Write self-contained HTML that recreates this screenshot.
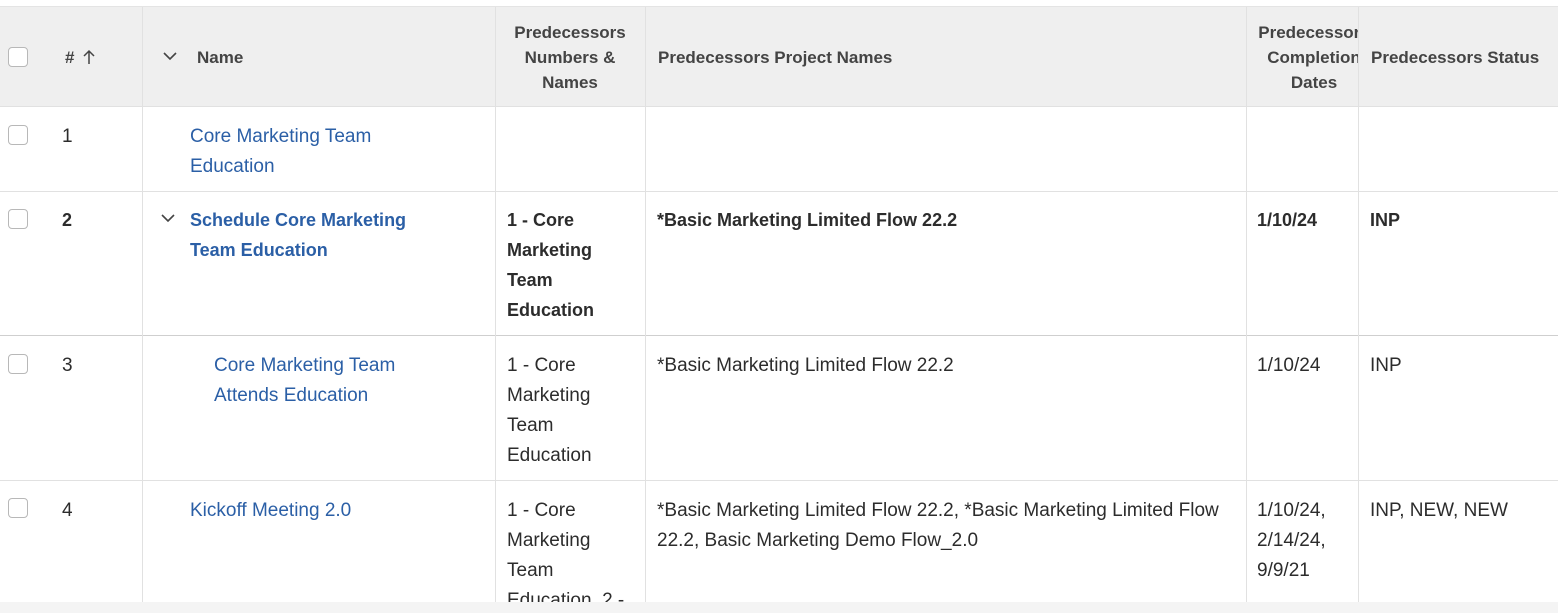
<!DOCTYPE html>
<html><head><meta charset="utf-8"><style>
body{margin:0;width:1558px;height:613px;overflow:hidden;background:#fff;font-family:"Liberation Sans",sans-serif;color:#2c2c2c;position:relative}
.a{position:absolute}
.t{position:absolute;font-size:19px;line-height:30px;white-space:nowrap;margin-top:2px}
.h{position:absolute;font-size:17px;line-height:25px;color:#444;font-weight:bold;white-space:nowrap}
.l{color:#2b5fa6}
.b{font-weight:bold;font-size:18px;margin-top:0}
.cb{position:absolute;left:8px;width:18px;height:18px;border:1px solid #b8b8b8;border-radius:4px;background:#fff}
.vl{position:absolute;width:1px;background:#e1e1e1}
.hl{position:absolute;left:0;width:1558px;height:1px;background:#e1e1e1}
</style></head><body>
<div class="a" style="left:0;top:6px;width:1558px;height:100px;background:#efefef;border-top:1px solid #e4e4e4"></div>
<div class="a" style="left:0;top:602px;width:1558px;height:11px;background:#f4f4f4"></div>
<div class="hl" style="top:106px"></div>
<div class="hl" style="top:191px"></div>
<div class="hl" style="top:335px;background:#cfcfcf"></div>
<div class="hl" style="top:480px"></div>
<div class="vl" style="left:142px;top:7px;height:595px"></div>
<div class="vl" style="left:495px;top:7px;height:595px"></div>
<div class="vl" style="left:645px;top:7px;height:595px"></div>
<div class="vl" style="left:1246px;top:7px;height:595px"></div>
<div class="vl" style="left:1358px;top:7px;height:595px"></div>
<div class="cb" style="top:47px"></div>
<div class="cb" style="top:125px"></div>
<div class="cb" style="top:209px"></div>
<div class="cb" style="top:354px"></div>
<div class="cb" style="top:498px"></div>
<div class="h" style="left:65px;top:45px">#</div>
<svg class="a" style="left:82px;top:49px" width="14" height="16"><path d="M7 15V2M2 7l5-5 5 5" stroke="#444" stroke-width="1.5" fill="none"/></svg>
<svg class="a" style="left:162px;top:51px" width="16" height="10"><path d="M2 2l6 6 6-6" stroke="#444" stroke-width="1.6" fill="none"/></svg>
<div class="h" style="left:197px;top:45px">Name</div>
<div class="h" style="left:495px;width:150px;top:20px;text-align:center">Predecessors<br>Numbers &amp;<br>Names</div>
<div class="h" style="left:658px;top:45px">Predecessors Project Names</div>
<div class="a" style="left:1247px;top:20px;width:111px;height:80px;overflow:hidden"><div class="h" style="left:11px;width:112px;top:0;text-align:center">Predecessors<br>Completion<br>Dates</div></div>
<div class="h" style="left:1371px;top:45px">Predecessors Status</div>

<div class="t" style="left:62px;top:120px">1</div>
<div class="t l" style="left:190px;top:120px">Core Marketing Team<br>Education</div>

<div class="t b" style="left:62px;top:205px">2</div>
<svg class="a" style="left:160px;top:213px" width="16" height="10"><path d="M2 2l6 6 6-6" stroke="#444" stroke-width="1.6" fill="none"/></svg>
<div class="t l b" style="left:190px;top:205px">Schedule Core Marketing<br>Team Education</div>
<div class="t b" style="left:507px;top:205px">1 - Core<br>Marketing<br>Team<br>Education</div>
<div class="t b" style="left:657px;top:205px">*Basic Marketing Limited Flow 22.2</div>
<div class="t b" style="left:1257px;top:205px">1/10/24</div>
<div class="t b" style="left:1370px;top:205px">INP</div>

<div class="t" style="left:62px;top:349px">3</div>
<div class="t l" style="left:214px;top:349px">Core Marketing Team<br>Attends Education</div>
<div class="t" style="left:507px;top:349px">1 - Core<br>Marketing<br>Team<br>Education</div>
<div class="t" style="left:657px;top:349px">*Basic Marketing Limited Flow 22.2</div>
<div class="t" style="left:1257px;top:349px">1/10/24</div>
<div class="t" style="left:1370px;top:349px">INP</div>

<div class="a" style="left:0;top:481px;width:1558px;height:121px;overflow:hidden">
<div class="t" style="left:62px;top:13px">4</div>
<div class="t l" style="left:190px;top:13px">Kickoff Meeting 2.0</div>
<div class="t" style="left:507px;top:13px">1 - Core<br>Marketing<br>Team<br>Education, 2 -</div>
<div class="t" style="left:657px;top:13px">*Basic Marketing Limited Flow 22.2, *Basic Marketing Limited Flow<br>22.2, Basic Marketing Demo Flow_2.0</div>
<div class="t" style="left:1257px;top:13px">1/10/24,<br>2/14/24,<br>9/9/21</div>
<div class="t" style="left:1370px;top:13px">INP, NEW, NEW</div>
</div>
</body></html>
